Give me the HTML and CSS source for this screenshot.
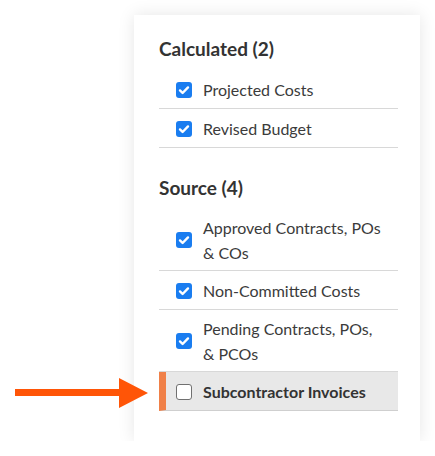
FILE: index.html
```html
<!DOCTYPE html>
<html lang="en">
<head>
  <meta charset="UTF-8">
  <meta name="viewport" content="width=device-width, initial-scale=1.0">
  <title>Columns</title>
  <link rel="stylesheet" href="styles.css">
</head>
<body>
  <div class="panel">
    <!-- Calculated -->
    <h2 class="group-title">Calculated (2)</h2>
    <ul class="options">
      <li class="option">
        <span class="box checked"><svg viewBox="0 0 16 16"><path d="M4 8.4l2.6 2.6L12 5.4" /></svg></span>
        <span class="label">Projected Costs</span>
      </li>
      <li class="option">
        <span class="box checked"><svg viewBox="0 0 16 16"><path d="M4 8.4l2.6 2.6L12 5.4" /></svg></span>
        <span class="label">Revised Budget</span>
      </li>
    </ul>

    <!-- Source -->
    <h2 class="group-title source">Source (4)</h2>
    <ul class="options">
      <li class="option">
        <span class="box checked"><svg viewBox="0 0 16 16"><path d="M4 8.4l2.6 2.6L12 5.4" /></svg></span>
        <span class="label">Approved Contracts, POs<br>&amp; COs</span>
      </li>
      <li class="option">
        <span class="box checked"><svg viewBox="0 0 16 16"><path d="M4 8.4l2.6 2.6L12 5.4" /></svg></span>
        <span class="label">Non-Committed Costs</span>
      </li>
      <li class="option">
        <span class="box checked"><svg viewBox="0 0 16 16"><path d="M4 8.4l2.6 2.6L12 5.4" /></svg></span>
        <span class="label">Pending Contracts, POs,<br>&amp; PCOs</span>
      </li>
      <li class="option highlight">
        <svg class="pointer" viewBox="0 0 133 30"><path d="M0 11H104V0L133 15L104 30V18H0Z" /></svg>
        <span class="box"></span>
        <span class="label">Subcontractor Invoices</span>
      </li>
    </ul>
  </div>
</body>
</html>
```

FILE: styles.css
```css
* { box-sizing: border-box; }
body {
  margin: 0;
  background: #fff;
  font-family: Lato, "Open Sans", sans-serif;
  color: #3b3b3b;
}

/* Panel */
.panel {
  width: 286px;
  height: 426px;
  margin: 15px 0 0 134px;
  padding: 22px 22px 29px 25px;
  background: #fff;
  box-shadow: 0 0 16px rgba(0, 0, 0, 0.1);
}
.group-title {
  margin: 0 0 9px;
  font-size: 19px;
  line-height: 24px;
  font-weight: bold;
  color: #333;
}
.group-title.source { margin-top: 28px; }

/* Options */
.options { list-style: none; margin: 0; padding: 0; }
.option {
  position: relative;
  display: flex;
  align-items: center;
  gap: 11px;
  min-height: 39px;
  padding: 6px 0 5px 17px;
  border-bottom: 1px solid #d8d8d8;
  font-size: 16px;
  line-height: 25px;
}
.box {
  flex: none;
  width: 16px;
  height: 16px;
  border-radius: 3px;
  border: 1px solid #707070;
  background: #fff;
}
.box.checked {
  border: none;
  background: #1a7df0;
}
.box svg { display: block; width: 16px; height: 16px; }
.box path {
  fill: none;
  stroke: #fff;
  stroke-width: 2.4;
  stroke-linecap: round;
  stroke-linejoin: round;
}

/* Highlighted row */
.option.highlight {
  background: #e8e8e8;
  border-left: 7px solid #f08048;
  border-bottom-color: #cfcfcf;
  padding-left: 10px;
  font-weight: bold;
  color: #333;
}
.pointer {
  position: absolute;
  right: calc(100% + 18px);
  top: 6px;
  width: 133px;
  height: 30px;
}
.pointer path { fill: #ff5507; }
```
